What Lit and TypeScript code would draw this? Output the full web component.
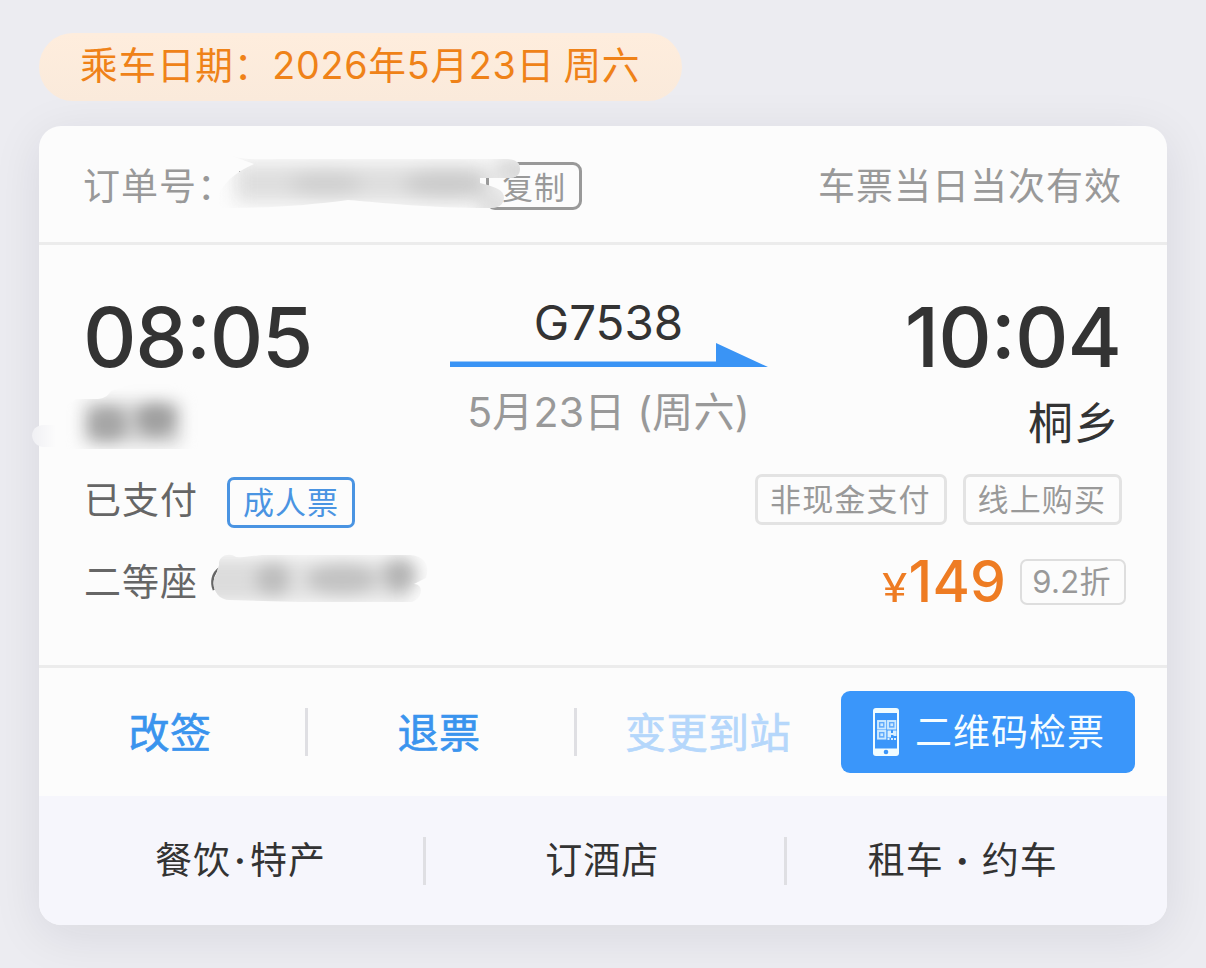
import { LitElement, html, css, svg } from 'lit';
import { customElement, property } from 'lit/decorators.js';

@customElement('ticket-tag')
export class TicketTag extends LitElement {
  @property({ reflect: true }) kind = 'muted';

  static styles = css`
    :host {
      box-sizing: border-box;
      display: inline-flex;
      align-items: center;
      justify-content: center;
      width: fit-content;
      height: 51px;
      padding: 0 13px 0 12px;
      border: 3px solid #e3e3e3;
      border-radius: 7px;
      color: #999;
      font-size: 31px;
      line-height: 45px;
      letter-spacing: 1.1px;
      white-space: nowrap;
    }

    :host([kind='blue']) {
      padding-left: 13px;
      border-color: #4a94e2;
      color: #4a94e2;
      letter-spacing: 1px;
    }

    :host([kind='copy']) {
      height: 48px;
      padding: 3px 13px 0;
      border-color: #999;
      border-radius: 9px;
      letter-spacing: 1px;
    }

    :host([kind='discount']) {
      height: 46px;
      padding: 0 13px 0 10px;
      border: 2px solid #dedede;
      line-height: 42px;
      letter-spacing: 0.4px;
    }
  `;

  render() {
    return html`<slot></slot>`;
  }
}

// brushed-over private text: a soft outline with darker blurred spots in it
@customElement('ticket-smudge')
export class TicketSmudge extends LitElement {
  @property() part = 'order';

  static styles = css`
    :host {
      display: block;
    }

    svg {
      display: block;
      overflow: visible;
    }

    filter {
      color-interpolation-filters: sRGB;
    }
  `;

  order() {
    return html`
      <svg width="310" height="60" viewBox="215 155 310 60">
        <defs>
          <clipPath id="c">
            <path d="M229 155 C245 161 262 159 285 159 H505 C516 159 520 163 520 169 C520 175 516 178 508 178 H480 V183 C496 187 504 190 504 198 C503 206 498 208 488 208 C430 208 385 203 348 200 C310 205 275 208 222 208 C212 198 224 177 254 164 Z" />
          </clipPath>
          <filter id="f" x="-30%" y="-80%" width="160%" height="260%"><feGaussianBlur stdDeviation="9" /></filter>
        </defs>
        <path d="M239 171 h7 l-6 4z" fill="#888" />
        <g clip-path="url(#c)">
          <rect x="215" y="155" width="310" height="60" fill="#fcfcfc" />
          <g filter="url(#f)">
            <rect x="236" y="164" width="254" height="38" fill="#dedede" />
            <ellipse cx="326" cy="184" rx="36" ry="12" fill="#cfcfcf" />
            <ellipse cx="446" cy="184" rx="42" ry="14" fill="#cbcbcb" />
            <rect x="496" y="158" width="40" height="26" fill="#d6d6d6" />
            <rect x="480" y="194" width="32" height="24" fill="#dadada" />
          </g>
        </g>
      </svg>
    `;
  }

  station() {
    return html`
      <svg width="170" height="74" viewBox="30 380 170 74">
        <defs>
          <clipPath id="c">
            <path d="M76 399 H98 C106 398 108 395 111 391 C130 384 150 380 170 381 H200 V449 H60 V410 Z" />
          </clipPath>
          <filter id="f" x="-50%" y="-50%" width="200%" height="200%"><feGaussianBlur stdDeviation="7.5" /></filter>
          <linearGradient id="g" x1="0" x2="1">
            <stop offset="0" stop-color="#f0f0f4" />
            <stop offset="1" stop-color="#fcfcfc" />
          </linearGradient>
        </defs>
        <path d="M56 425 H44 C36 425 32 430 32 436 C33 443 38 447 44 447 H56 Z" fill="url(#g)" />
        <g clip-path="url(#c)">
          <g filter="url(#f)">
            <rect x="83" y="401" width="98" height="44" rx="6" fill="#d2d2d2" />
            <ellipse cx="107" cy="424" rx="20" ry="18" fill="#a6a6a6" />
            <ellipse cx="156" cy="419" rx="20" ry="17" fill="#a0a0a0" />
          </g>
        </g>
      </svg>
    `;
  }

  seat() {
    return html`
      <svg width="225" height="50" viewBox="205 554 225 50">
        <defs>
          <clipPath id="c">
            <path d="M219 565 C218 556 229 552 236 557 C244 558 250 556 262 555 H410 C425 556 430 566 426 578 L414 584 C424 584 423 598 412 602 H300 L230 600 C215 600 210 583 216 575 Z" />
          </clipPath>
          <filter id="f" x="-30%" y="-80%" width="160%" height="260%"><feGaussianBlur stdDeviation="8" /></filter>
        </defs>
        <path d="M220 568 C212 573 211 583 214 590" fill="none" stroke="#666" stroke-width="2.6" />
        <g clip-path="url(#c)">
          <rect x="205" y="554" width="225" height="50" fill="#fcfcfc" />
          <g filter="url(#f)">
            <rect x="200" y="558" width="88" height="44" fill="#dcdcdc" />
            <rect x="288" y="558" width="122" height="44" fill="#e2e2e2" />
            <ellipse cx="273" cy="579" rx="17" ry="16" fill="#bdbdbd" />
            <ellipse cx="342" cy="579" rx="36" ry="15" fill="#c2c2c2" />
            <ellipse cx="400" cy="575" rx="17" ry="17" fill="#b4b4b4" />
          </g>
        </g>
      </svg>
    `;
  }

  render() {
    if (this.part === 'station') return this.station();
    if (this.part === 'seat') return this.seat();
    return this.order();
  }
}

@customElement('app-root')
export class AppRoot extends LitElement {
  static styles = css`
    :host {
      box-sizing: border-box;
      display: flex;
      flex-direction: column;
      align-items: flex-start;
      gap: 25px;
      width: 1206px;
      height: 968px;
      padding: 33px 39px 43px;
      overflow: hidden;
      background: #ececf1;
      color: #333;
      font-family: Inter, 'Noto Sans CJK SC', sans-serif;
      font-size: 37px;
      letter-spacing: 1px;
      white-space: nowrap;
    }

    .date {
      box-sizing: border-box;
      position: relative;
      z-index: 1;
      width: 643px;
      height: 68px;
      padding-left: 41px;
      border-radius: 34px;
      background: linear-gradient(#feeddd, #faeadb);
      color: #ef8218;
      font-size: 37.7px;
      line-height: 65px;
      letter-spacing: 0.75px;
      word-spacing: -3px;
    }

    .card {
      display: flex;
      flex-direction: column;
      width: 1128px;
      height: 799px;
      border-radius: 22px;
      background: #fcfcfc;
      box-shadow: 0 10px 50px rgba(20, 20, 40, 0.09);
    }

    .head {
      box-sizing: border-box;
      position: relative;
      display: flex;
      align-items: center;
      height: 119px;
      padding: 0 45px 1px 44px;
      border-bottom: 3px solid #ececec;
      color: #999;
    }

    .head .valid {
      margin-left: auto;
    }

    .head ticket-tag {
      margin: 4px 0 0 251px;
    }

    .head ticket-smudge {
      position: absolute;
      left: 176px;
      top: 29px;
    }

    .trip {
      box-sizing: border-box;
      display: flex;
      justify-content: space-between;
      height: 213px;
      padding: 51px 47px 0 44px;
    }

    .end {
      position: relative;
      width: 240px;
    }

    .end.to {
      width: 226px;
      text-align: right;
    }

    .time {
      font-size: 83px;
      font-weight: 500;
      font-feature-settings: 'case';
      line-height: 82px;
      letter-spacing: -1.4px;
    }

    .to .time {
      margin-right: -1px;
      letter-spacing: -1px;
    }

    .place {
      padding-top: 14px;
      font-size: 45px;
      line-height: 64px;
    }

    .from ticket-smudge {
      position: absolute;
      left: -53px;
      top: 84px;
    }

    .middle {
      display: flex;
      flex-direction: column;
      align-items: center;
      width: 318px;
    }

    .train {
      font-size: 47.5px;
      line-height: 54px;
      letter-spacing: 0;
    }

    .arrow {
      display: block;
      margin-top: -7px;
    }

    .day {
      color: #999;
      font-size: 41px;
      line-height: 60px;
      letter-spacing: 0.2px;
      margin-top: 15px;
    }

    .info {
      box-sizing: border-box;
      display: flex;
      flex-direction: column;
      height: 210px;
      padding: 16px 41px 0 45px;
      border-bottom: 3px solid #ececec;
      color: #666;
    }

    .line {
      position: relative;
      display: flex;
      align-items: center;
      height: 51px;
    }

    .line + .line {
      margin-top: 31px;
    }

    .label {
      padding-bottom: 4px;
    }

    .line .adult {
      margin: 5px 0 0 29px;
    }

    .line .right {
      display: flex;
      align-items: center;
      gap: 16px;
      margin: 0 4px 0 auto;
    }

    .line .right.cost {
      gap: 14px;
      margin-right: 0;
    }

    .line ticket-smudge {
      position: absolute;
      left: 121px;
      top: -2px;
    }

    .price {
      display: flex;
      align-items: baseline;
      color: #ee7c23;
      font-size: 57px;
      font-weight: 550;
      line-height: 51px;
      letter-spacing: 0.2px;
    }

    .yen {
      margin-right: 3px;
      font-size: 39px;
      font-weight: 400;
      line-height: 1;
      transform: scaleX(1.18);
    }

    .actions {
      box-sizing: border-box;
      display: flex;
      align-items: center;
      height: 128px;
      padding-right: 32px;
      color: #3a94ee;
      font-size: 41px;
      letter-spacing: 0.5px;
      -webkit-text-stroke: 0.7px currentColor;
    }

    .cell {
      box-sizing: border-box;
      flex: 1;
      padding-right: 5px;
      text-align: center;
      line-height: 62px;
    }

    .actions .cell {
      flex: 0 0 266px;
      padding: 2px 4px 0 0;
    }

    .actions .cell.off {
      flex: 1;
      padding-right: 2px;
      color: #b5d7fb;
    }

    .bar {
      width: 3px;
      height: 48px;
      background: #dfdfe3;
    }

    .qr {
      box-sizing: border-box;
      display: flex;
      align-items: center;
      gap: 16px;
      width: 294px;
      height: 82px;
      padding-left: 32px;
      border-radius: 9px;
      background: #3a96fa;
      color: #f6fdff;
      font-size: 37px;
      letter-spacing: 1px;
      -webkit-text-stroke: 0;
    }

    .more {
      display: flex;
      align-items: center;
      height: 129px;
      padding-right: 23px;
      border-radius: 0 0 22px 22px;
      background: #f6f6fc;
    }

    .more .cell:first-child {
      flex: 0 0 384px;
      padding: 0 0 0 19px;
    }

    .dot {
      margin: 0 3px;
      font-weight: 600;
    }

    .dot.wide {
      margin: 0 12px;
      font-weight: 800;
    }
  `;

  qrIcon() {
    const eyes = [[4, 12], [14, 12], [4, 22]];
    return html`
      <svg width="26" height="48" viewBox="0 0 26 48">
        <rect width="26" height="48" rx="3" fill="#f0fcff" />
        <rect x="2" y="5" width="22" height="35.5" fill="#3a96fa" />
        <circle cx="13" cy="44" r="2.3" fill="#3a96fa" />
        ${eyes.map(([x, y]) => svg`
          <rect x=${x + 1} y=${y + 1} width="7.4" height="7.6" fill="#5faafc" stroke="#cdeaff" stroke-width="1.9" />
          <rect x=${x + 3.4} y=${y + 3.4} width="2.7" height="2.7" fill="#cdeaff" />
        `)}
        <path d="M14.500 22.500 h3.500 v2.500 h2 v-2.500 h3.500 v5.500 h-3 v-1 h-2.500 v2.500 h-3.500z M14.500 30 h2 v2 h-2z M18 30 h2 v2 h-2z M21 30 h2 v2 h-2z" fill="#d8efff" />
      </svg>
    `;
  }

  render() {
    return html`
      <div class="date">乘车日期：2026年5月23日 周六</div>
      <div class="card">
        <div class="head">
          <span>订单号：</span>
          <ticket-tag kind="copy">复制</ticket-tag>
          <ticket-smudge part="order"></ticket-smudge>
          <span class="valid">车票当日当次有效</span>
        </div>

        <div class="trip">
          <div class="end from">
            <div class="time">08:05</div>
            <ticket-smudge part="station"></ticket-smudge>
          </div>
          <div class="middle">
            <div class="train">G7538</div>
            <svg class="arrow" width="318" height="24" viewBox="0 0 318 24">
              <path d="M0 18.500 H266 V0 L318 24 H0Z" fill="#3a94f5" />
            </svg>
            <div class="day">5月23日 (周六)</div>
          </div>
          <div class="end to">
            <div class="time">10:04</div>
            <div class="place">桐乡</div>
          </div>
        </div>

        <div class="info">
          <div class="line">
            <span class="label">已支付</span>
            <ticket-tag class="adult" kind="blue">成人票</ticket-tag>
            <div class="right">
              <ticket-tag>非现金支付</ticket-tag>
              <ticket-tag>线上购买</ticket-tag>
            </div>
          </div>
          <div class="line">
            <span class="label">二等座</span>
            <ticket-smudge part="seat"></ticket-smudge>
            <div class="right cost">
              <span class="price"><span class="yen">¥</span>149</span>
              <ticket-tag kind="discount">9.2折</ticket-tag>
            </div>
          </div>
        </div>

        <div class="actions">
          <div class="cell">改签</div>
          <div class="bar"></div>
          <div class="cell">退票</div>
          <div class="bar"></div>
          <div class="cell off">变更到站</div>
          <div class="qr">${this.qrIcon()}<span class="label">二维码检票</span></div>
        </div>

        <div class="more">
          <div class="cell">餐饮<span class="dot">·</span>特产</div>
          <div class="bar"></div>
          <div class="cell">订酒店</div>
          <div class="bar"></div>
          <div class="cell">租车<span class="dot wide">·</span>约车</div>
        </div>
      </div>
    `;
  }
}
